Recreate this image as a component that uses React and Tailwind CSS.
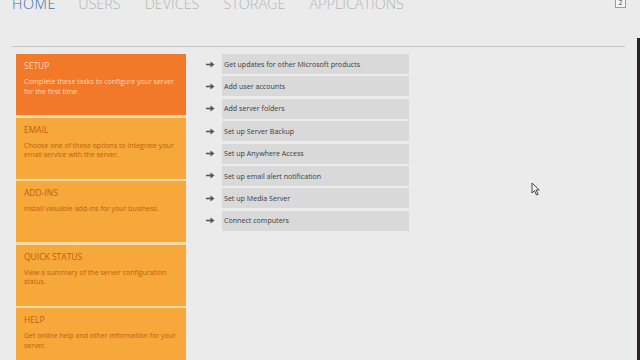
import React from 'react'

const tabs = ['HOME', 'USERS', 'DEVICES', 'STORAGE', 'APPLICATIONS']

const tiles = [
  { title: 'SETUP', lines: ['Complete these tasks to configure your server', 'for the first time.'], active: true },
  { title: 'EMAIL', lines: ['Choose one of these options to integrate your', 'email service with the server.'] },
  { title: 'ADD-INS', lines: ['Install valuable add-ins for your business.'] },
  { title: 'QUICK STATUS', lines: ['View a summary of the server configuration', 'status.'] },
  { title: 'HELP', lines: ['Get online help and other information for your', 'server.'] },
]

const tasks = [
  'Get updates for other Microsoft products',
  'Add user accounts',
  'Add server folders',
  'Set up Server Backup',
  'Set up Anywhere Access',
  'Set up email alert notification',
  'Set up Media Server',
  'Connect computers',
]

function Arrow() {
  return (
    <svg width="9" height="7" viewBox="0 0 9 7" className="shrink-0">
      <path d="M0 3.5h6" stroke="#555" strokeWidth="1.6" />
      <path d="M4.5 0.5 8.5 3.5 4.5 6.5z" fill="#555" />
    </svg>
  )
}

export default function App() {
  return (
    <div
      className="relative w-[640px] h-[360px] overflow-hidden bg-[#ebebeb]"
      style={{ fontFamily: '"Open Sans", "Noto Sans", sans-serif' }}
    >
      {/* top tabs, partly cut off by the frame */}
      <div className="flex h-[47px] border-b border-[#c4c4c4] mx-[12px] mr-[15px]">
        <nav className="flex gap-[24px] -mt-[5px] text-[14.4px] font-light leading-[18px]">
          {tabs.map((t, i) => (
            <span
              key={t}
              className={i === 0 ? 'text-[#3f6fa8] tracking-[0.6px] -mr-[2px]' : 'text-[#b4b4b4]'}
            >
              {t}
            </span>
          ))}
        </nav>
        <div className="ml-auto -mt-[2px] mr-[-1px] w-[11px] h-[10px] border border-[#9a9a9a] bg-[#f4f4f4] text-[7px] leading-[8px] text-center text-[#444]">
          2
        </div>
      </div>

      <div className="flex gap-[20px] pl-[16px] pt-[7px]">
        {/* category tiles */}
        <div className="flex flex-col gap-[2.6px] w-[170px] bg-[#f9dba8]">
          {tiles.map((t) => (
            <div
              key={t.title}
              className={
                'h-[61px] pl-[8px] pt-[6px] ' +
                (t.active ? 'bg-[#f2792a] text-[#fcd8b8]' : 'bg-[#f6a83b] text-[#c0600e]')
              }
            >
              <div className="text-[8.5px] leading-[12px]">{t.title}</div>
              <div className="mt-[5px] text-[7px] leading-[9.5px] whitespace-nowrap">
                {t.lines.map((l) => (
                  <div key={l}>{l}</div>
                ))}
              </div>
            </div>
          ))}
        </div>

        {/* task list */}
        <div className="flex flex-col gap-[2.4px]">
          {tasks.map((t) => (
            <div key={t} className="flex items-center gap-[7px]">
              <Arrow />
              <div className="w-[187px] h-[20px] bg-[#d9d9d9] pl-[2px] flex items-center text-[7.1px] text-[#3c3c3c]">
                {t}
              </div>
            </div>
          ))}
        </div>
      </div>

      {/* mouse pointer */}
      <svg width="10" height="14" viewBox="0 0 10 14" className="absolute left-[531px] top-[182px]">
        <path d="M1 1v10l2.5-2.3L5.5 13l1.6-.7-2-4.3H8.2z" fill="#f4f4f4" stroke="#333" strokeWidth="0.9" />
      </svg>

      {/* dark strip at the right edge */}
      <div className="absolute right-0 top-[38px] w-[3px] h-[322px] bg-[#2a2326]" />
    </div>
  )
}
